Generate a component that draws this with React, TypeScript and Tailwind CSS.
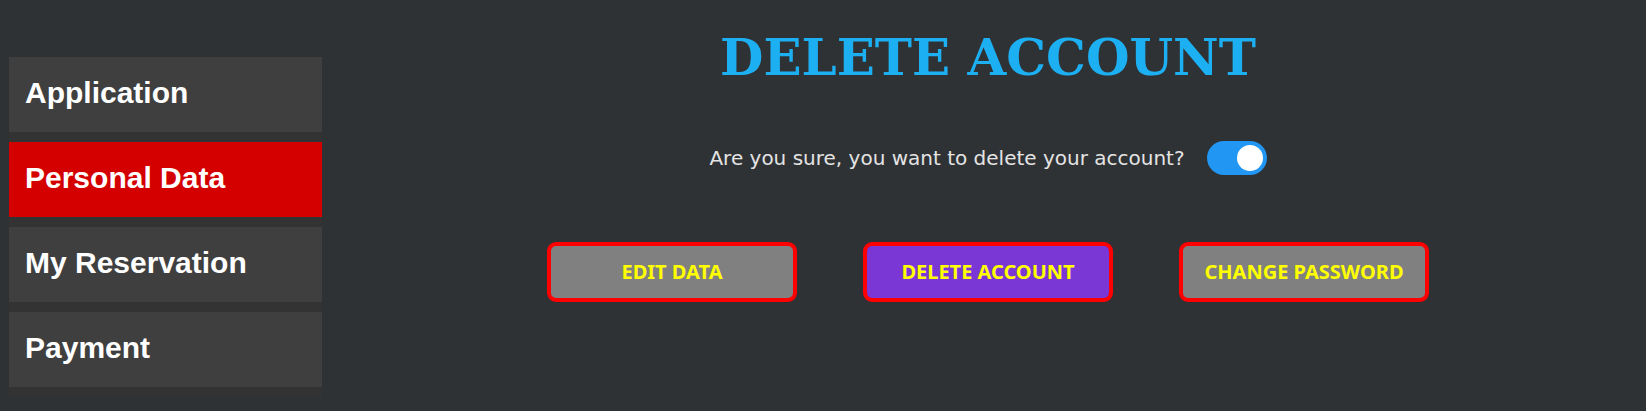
import React from "react";

const items = ["Application", "Personal Data", "My Reservation", "Payment"];

export default function App() {
  return (
    <div className="min-h-screen w-full bg-[#2f3235] flex">
      <div className="w-[330px] shrink-0 pl-[9px] pr-[8px] pt-[57px]">
        <div className="bg-[#333333] flex flex-col">
          {items.map((it) => (
            <div
              key={it}
              className={
                "h-[75px] mb-[10px] flex items-center pl-[16px] pb-[5px] text-white font-bold text-[30px] font-['Liberation_Sans',Arial,sans-serif] " +
                (it === "Personal Data" ? "bg-[#d40000]" : "bg-[#3f3f3f]")
              }
            >
              {it}
            </div>
          ))}
        </div>
      </div>
      <div className="flex-1 flex flex-col items-center">
        <h1 className="mt-[27px] text-[50px] leading-[62px] font-bold text-[#1cb0f3] font-['DejaVu_Serif',serif]">
          DELETE ACCOUNT
        </h1>
        <div className="mt-[52px] flex items-center gap-[22px]">
          <span className="text-[20px] text-[#e4e4e4] font-['DejaVu_Sans',sans-serif]">
            Are you sure, you want to delete your account?
          </span>
          <div className="relative w-[60px] h-[34px] rounded-full bg-[#2196f3]">
            <div className="absolute right-[4px] top-[4px] w-[26px] h-[26px] rounded-full bg-white" />
          </div>
        </div>
        <div className="mt-[67px] flex gap-[66px]">
          <button className="w-[250px] h-[60px] rounded-[9px] border-[4px] border-[#ff0000] bg-[#808080] text-[#ffff00] font-bold text-[20px] font-['Noto_Sans',sans-serif]">
            EDIT DATA
          </button>
          <button className="w-[250px] h-[60px] rounded-[9px] border-[4px] border-[#ff0000] bg-[#7b37d6] text-[#ffff00] font-bold text-[20px] font-['Noto_Sans',sans-serif]">
            DELETE ACCOUNT
          </button>
          <button className="w-[250px] h-[60px] rounded-[9px] border-[4px] border-[#ff0000] bg-[#808080] text-[#ffff00] font-bold text-[20px] font-['Noto_Sans',sans-serif]">
            CHANGE PASSWORD
          </button>
        </div>
      </div>
    </div>
  );
}
